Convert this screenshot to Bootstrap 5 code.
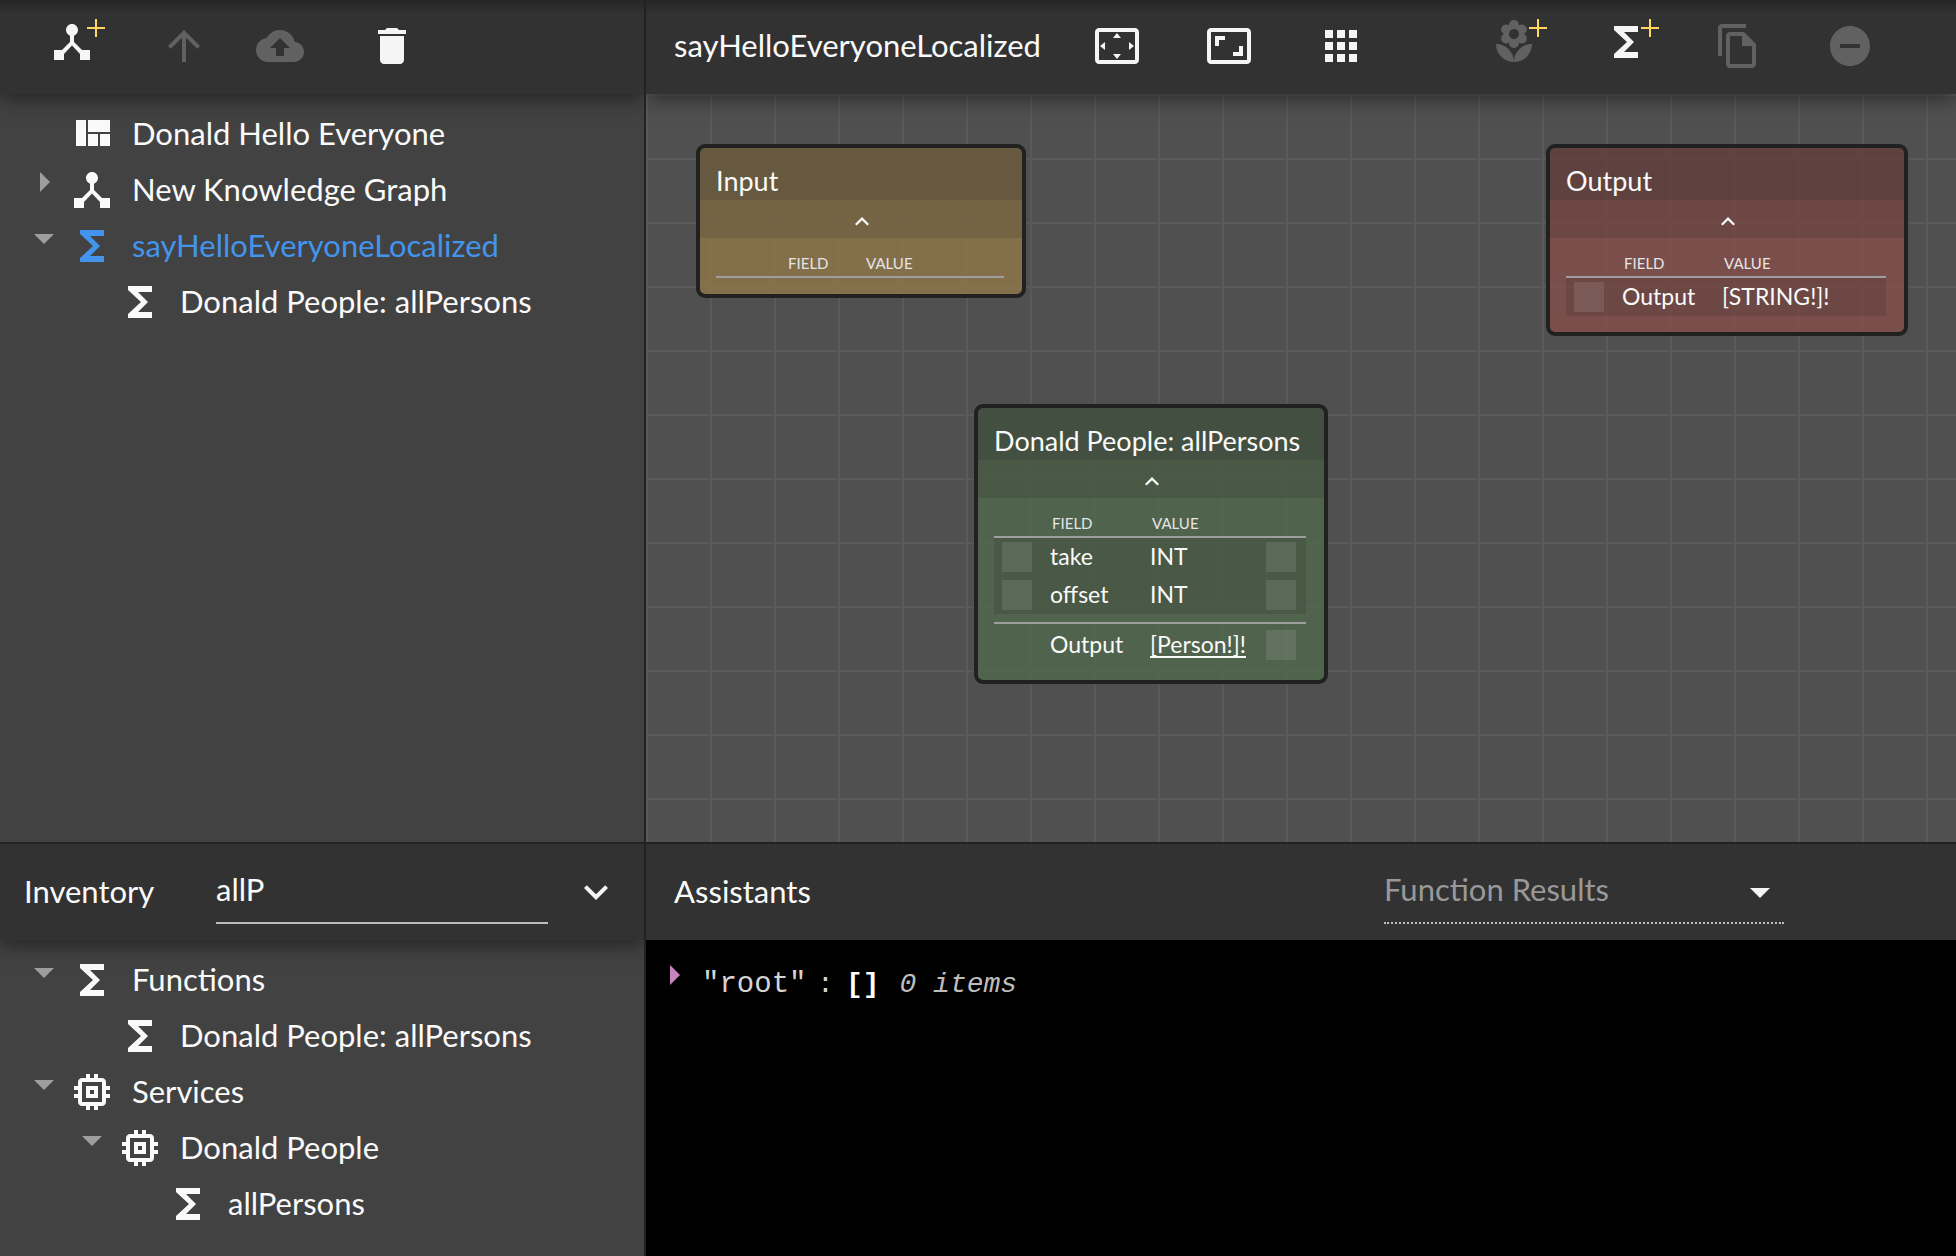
<!DOCTYPE html>
<html lang="en">
<head>
<meta charset="utf-8">
<meta name="viewport" content="width=device-width, initial-scale=1">
<title>Knowledge graph editor</title>
<link rel="stylesheet" href="https://cdn.jsdelivr.net/npm/bootstrap@5.3.0/dist/css/bootstrap.min.css">
<script src="https://cdn.jsdelivr.net/npm/bootstrap@5.3.0/dist/js/bootstrap.bundle.min.js"></script>
<style>
  :root {
    --bar: #323232;
    --panel: #424242;
    --line: #222;
    --ink: #fafafa;
    --off: #616161;
  }
  body {
    background: var(--panel);
    color: var(--ink);
    font-family: Lato, "Open Sans", sans-serif;
    font-size: 31px;
    line-height: 40px;
  }
  svg { display: block; fill: currentColor; flex: none; }
  .ico { width: 48px; height: 48px; }

  .workspace {
    display: grid;
    grid-template-columns: 33.03% minmax(0, 1fr);
    grid-template-rows: 67.2% minmax(0, 1fr);
  }
  .pane-left { border-right: 2px solid var(--line); }
  .pane-top { border-bottom: 2px solid var(--line); }

  .bar { background: var(--bar); flex: none; position: relative; z-index: 2; }
  .bar-main { height: 94px; padding-bottom: 2px; box-shadow: 0 4px 20px rgba(0, 0, 0, .5); background: linear-gradient(#252525, var(--bar) 14px); }
  .bar-sub { height: 96px; }
  .bar-cast { box-shadow: 0 4px 20px rgba(0, 0, 0, .5); }
  .bar-title { font-size: 31px; font-weight: 400; line-height: 40px; margin: 0; padding-bottom: 2px; }

  .tool { background: none; border: 0; padding: 0; color: #f5f5f5; position: relative; }
  .tool:disabled { color: var(--off); }
  .tool-add { margin-bottom: 8px; }
  .tool-add .plus { position: absolute; right: -10px; top: 0; width: 20px; height: 20px; color: #ffd75e; }
  .gap-tools { gap: 64px; }
  .tools-left { padding-left: 48px; }
  .tools-right { padding-right: 82px; }
  .pad-title { padding-left: 28px; }
  .tools-mid { margin-left: 52px; }

  .tree { list-style: none; margin: 0; padding: 12px 0 0; }
  .tree .tree { padding: 0 0 0 48px; }
  .tree-row { height: 56px; padding-left: 34px; }
  .twist { background: none; border: 0; padding: 0; margin: 10px 14px 0 0; width: 20px; height: 20px; color: #9e9e9e; align-self: flex-start; }
  .tree-link { color: inherit; text-decoration: none; gap: 16px; }
  .tree-link span { padding-bottom: 3px; }
  .tree-link.current { color: #4294ec; }

  .field-find, .field-pick { background: transparent; border: 0; border-radius: 0; padding: 0 0 4px; height: 64px; outline: 0; }
  .field-find { color: var(--ink); border-bottom: 2px solid #bdbdbd; width: 332px; }
  .field-pick { color: #999; border-bottom: 2px dotted #bdbdbd; width: 400px; appearance: none; display: block; }
  .pick-mark { position: absolute; right: 14px; top: 28px; width: 20px; height: 10px; color: #f5f5f5; pointer-events: none; }
  .inv-name { padding-left: 24px; padding-bottom: 2px; width: 216px; }
  .inv-more { margin-left: 24px; }
  .pick-box { margin-right: 172px; }

  .board {
    background-color: #505050;
    background-image:
      linear-gradient(90deg, #595959 2px, transparent 2px),
      linear-gradient(#595959 2px, transparent 2px);
    background-size: 64px 64px;
    overflow: hidden;
  }
  .node { position: absolute; border: 4px solid #212121; border-radius: 9px; font-size: 23px; line-height: 28px; background-clip: padding-box; }
  .node-in { left: 50px; top: 50px; width: 330px; background-color: rgba(144, 120, 74, .8); }
  .node-out { left: 900px; top: 50px; width: 362px; background-color: rgba(132, 78, 72, .8); }
  .node-fn { left: 328px; top: 310px; width: 354px; background-color: rgba(80, 104, 76, .8); }
  .node-head { height: 52px; margin: 0; padding: 14px 0 0 16px; font-size: 27px; line-height: 38px; font-weight: 400; background: rgba(40, 40, 40, .32); white-space: nowrap; }
  .node-fold { display: flex; width: 100%; height: 38px; border: 0; padding: 4px 0 0 2px; background: rgba(40, 40, 40, .16); color: var(--ink); align-items: center; justify-content: center; }
  .node-fold svg { width: 24px; height: 24px; }
  .node-body { padding: 0 18px 16px 16px; }
  .node-body table { width: 100%; table-layout: fixed; border-collapse: separate; border-spacing: 0; }
  .node-body th { font-size: 15px; line-height: 20px; font-weight: 400; padding: 14px 0 2px 10px; color: #e6e6e6; }
  .node-body thead > tr > * { height: 40px; border-bottom: 2px solid #9e9e9e; }
  .node-body tbody td { height: 38px; padding: 0 0 2px 8px; white-space: nowrap; }
  .node-body tbody .plugcell { padding: 0 0 0 8px; }
  .rows-in { background: rgba(40, 40, 40, .16); }
  .node-sum { border-top: 2px solid #9e9e9e; margin-top: 8px; padding-top: 2px; }
  .c-plug { width: 48px; }
  .c-wide { width: 62px; }
  .c-name { width: 100px; }
  .c-name-s { width: 78px; }
  .plug { display: block; width: 30px; height: 30px; border: 0; padding: 0; background: rgba(255, 255, 255, .1); }
  .type-link { color: inherit; text-underline-offset: 3px; text-decoration-thickness: 2px; }

  .console { background: #000; color: #d4d4d4; font-family: "Liberation Mono", monospace; font-size: 28px; line-height: 40px; padding: 25px 0 0 18px; }
  .console .twist { color: #c586c0; margin: 0 18px 0 0; }
  .console .key { font-size: 29px; width: 115px; }
  .console strong { color: #fff; margin: 0 20px 0 12px; }
  .console em { color: #bdbdbd; }
</style>
</head>
<body>
<svg class="d-none" aria-hidden="true">
  <symbol id="i-hub" viewBox="0 0 24 24"><path d="M17 16l-4-4V8.820C14.160 8.400 15 7.300 15 6c0-1.660-1.340-3-3-3S9 4.340 9 6c0 1.300.84 2.400 2 2.820V12l-4 4H3v5h5v-3.050l4-4.200 4 4.200V21h5v-5h-4z"/></symbol>
  <symbol id="i-plus" viewBox="0 0 20 20"><path d="M9 1h2v8h8v2h-8v8H9v-8H1V9h8z"/></symbol>
  <symbol id="i-up" viewBox="0 0 24 24"><path d="M4 12l1.410 1.410L11 7.830V20h2V7.830l5.580 5.590L20 12l-8-8-8 8z"/></symbol>
  <symbol id="i-cloud" viewBox="0 0 24 24"><path d="M19.350 10.040C18.670 6.590 15.640 4 12 4 9.110 4 6.600 5.640 5.350 8.040 2.340 8.360 0 10.910 0 14c0 3.310 2.690 6 6 6h13c2.760 0 5-2.240 5-5 0-2.640-2.050-4.780-4.650-4.960zM14 13v4h-4v-4H7l5-5 5 5h-3z"/></symbol>
  <symbol id="i-trash" viewBox="0 0 24 24"><path d="M6 19c0 1.100.9 2 2 2h8c1.100 0 2-.9 2-2V7H6v12zM19 4h-3.500l-1-1h-5l-1 1H5v2h14V4z"/></symbol>
  <symbol id="i-scan" viewBox="0 0 24 24"><path d="M12 5.500L10 8h4l-2-2.500zm6 4.500v4l2.500-2L18 10zM6 10l-2.500 2L6 14v-4zm8 6h-4l2 2.500 2-2.500zm7-13H3c-1.100 0-2 .9-2 2v14c0 1.100.9 2 2 2h18c1.100 0 2-.9 2-2V5c0-1.100-.9-2-2-2zm0 16H3V5h18v14z"/></symbol>
  <symbol id="i-ratio" viewBox="0 0 24 24"><path d="M19 12h-2v3h-3v2h5v-5zM7 9h3V7H5v5h2V9zm14-6H3c-1.100 0-2 .9-2 2v14c0 1.100.9 2 2 2h18c1.100 0 2-.9 2-2V5c0-1.100-.9-2-2-2zm0 16H3V5h18v14z"/></symbol>
  <symbol id="i-apps" viewBox="0 0 24 24"><path d="M4 8h4V4H4v4zm6 12h4v-4h-4v4zm-6 0h4v-4H4v4zm0-6h4v-4H4v4zm6 0h4v-4h-4v4zm6-10v4h4V4h-4zm-6 4h4V4h-4v4zm6 6h4v-4h-4v4zm0 6h4v-4h-4v4z"/></symbol>
  <symbol id="i-flower" viewBox="0 0 24 24"><path d="M12 22c4.970 0 9-4.030 9-9-4.970 0-9 4.030-9 9zM5.600 10.250c0 1.380 1.120 2.500 2.500 2.500.53 0 1.010-.16 1.420-.44l-.02.19c0 1.380 1.120 2.500 2.500 2.500s2.500-1.120 2.500-2.500l-.02-.19c.4.28.89.44 1.420.44 1.380 0 2.500-1.120 2.500-2.500 0-1-.59-1.850-1.430-2.250.84-.4 1.430-1.250 1.430-2.250 0-1.380-1.120-2.500-2.500-2.500-.53 0-1.010.16-1.420.44l.02-.19C14.500 2.120 13.380 1 12 1S9.500 2.120 9.500 3.500l.02.19c-.4-.28-.89-.44-1.420-.44-1.380 0-2.500 1.120-2.500 2.500 0 1 .59 1.850 1.430 2.250-.84.4-1.430 1.250-1.430 2.250zM12 5.500c1.380 0 2.500 1.120 2.500 2.500s-1.120 2.500-2.500 2.500S9.500 9.380 9.500 8s1.120-2.500 2.500-2.500zM3 13c0 4.970 4.030 9 9 9 0-4.970-4.030-9-9-9z"/></symbol>
  <symbol id="i-sum" viewBox="0 0 24 24"><path d="M18 4H6v2l6.500 6L6 18v2h12v-3h-7l5-5-5-5h7z"/></symbol>
  <symbol id="i-copy" viewBox="0 0 24 24"><path d="M16 1H4c-1.100 0-2 .9-2 2v14h2V3h12V1zm-1 4H8c-1.100 0-1.990.9-1.990 2L6 21c0 1.100.89 2 1.990 2H19c1.100 0 2-.9 2-2V11l-6-6zM8 21V7h6v5h5v9H8z"/></symbol>
  <symbol id="i-minus" viewBox="0 0 24 24"><path d="M12 2C6.480 2 2 6.480 2 12s4.480 10 10 10 10-4.480 10-10S17.520 2 12 2zm5 11H7v-2h10v2z"/></symbol>
  <symbol id="i-quilt" viewBox="0 0 24 24"><path d="M10 18h5v-6h-5v6zm-6 0h5V5H4v13zm12 0h5v-6h-5v6zM10 5v6h11V5H10z"/></symbol>
  <symbol id="i-chip" viewBox="0 0 24 24"><path d="M15 9H9v6h6V9zm-2 4h-2v-2h2v2zm8-2V9h-2V7c0-1.100-.9-2-2-2h-2V3h-2v2h-2V3H9v2H7c-1.100 0-2 .9-2 2v2H3v2h2v2H3v2h2v2c0 1.100.9 2 2 2h2v2h2v-2h2v2h2v-2h2c1.100 0 2-.9 2-2v-2h2v-2h-2v-2h2zm-4 6H7V7h10v10z"/></symbol>
  <symbol id="i-down" viewBox="0 0 24 24"><path d="M16.590 8.590L12 13.170 7.410 8.590 6 10l6 6 6-6z"/></symbol>
  <symbol id="i-fold" viewBox="0 0 24 24"><path d="M12 8l-7 7 1.600 1.600L12 11.200l5.400 5.400L19 15z"/></symbol>
  <symbol id="i-open" viewBox="0 0 20 20"><path d="M0 6h20L10 16z"/></symbol>
  <symbol id="i-shut" viewBox="0 0 20 20"><path d="M6 0v20l10-10z"/></symbol>
</svg>

<main class="workspace vh-100 overflow-hidden">
  <section class="pane-left pane-top d-flex flex-column overflow-hidden" aria-label="Solution">
    <header class="bar bar-main d-flex align-items-center tools-left">
      <button class="tool tool-add" aria-label="Add graph"><svg class="ico"><use href="#i-hub"/></svg><svg class="plus"><use href="#i-plus"/></svg></button>
      <button class="tool ms-5 ps-3" aria-label="Move up" disabled><svg class="ico"><use href="#i-up"/></svg></button>
      <button class="tool ms-5" aria-label="Upload" disabled><svg class="ico"><use href="#i-cloud"/></svg></button>
      <button class="tool ms-5 ps-3" aria-label="Delete"><svg class="ico"><use href="#i-trash"/></svg></button>
    </header>
    <ul class="tree">
      <li><div class="tree-row d-flex align-items-center"><span class="twist"></span><a class="tree-link d-flex align-items-center" href="#"><svg class="ico"><use href="#i-quilt"/></svg><span>Donald Hello Everyone</span></a></div></li>
      <li><div class="tree-row d-flex align-items-center"><button class="twist" aria-label="Expand"><svg width="20" height="20"><use href="#i-shut"/></svg></button><a class="tree-link d-flex align-items-center" href="#"><svg class="ico"><use href="#i-hub"/></svg><span>New Knowledge Graph</span></a></div></li>
      <li><div class="tree-row d-flex align-items-center"><button class="twist" aria-label="Collapse"><svg width="20" height="20"><use href="#i-open"/></svg></button><a class="tree-link current d-flex align-items-center" href="#"><svg class="ico"><use href="#i-sum"/></svg><span>sayHelloEveryoneLocalized</span></a></div>
        <ul class="tree">
          <li><div class="tree-row d-flex align-items-center"><span class="twist"></span><a class="tree-link d-flex align-items-center" href="#"><svg class="ico"><use href="#i-sum"/></svg><span>Donald People: allPersons</span></a></div></li>
        </ul>
      </li>
    </ul>
  </section>

  <section class="pane-top d-flex flex-column overflow-hidden" aria-label="Function editor">
    <header class="bar bar-main d-flex align-items-center pad-title tools-right">
      <h1 class="bar-title">sayHelloEveryoneLocalized</h1>
      <div class="tools-mid d-flex gap-tools">
        <button class="tool" aria-label="Centre"><svg class="ico"><use href="#i-scan"/></svg></button>
        <button class="tool" aria-label="Fit to view"><svg class="ico"><use href="#i-ratio"/></svg></button>
        <button class="tool" aria-label="Arrange"><svg class="ico"><use href="#i-apps"/></svg></button>
      </div>
      <div class="ms-auto d-flex align-items-center gap-tools">
        <button class="tool tool-add" aria-label="Add entity" disabled><svg class="ico"><use href="#i-flower"/></svg><svg class="plus"><use href="#i-plus"/></svg></button>
        <button class="tool tool-add" aria-label="Add function"><svg class="ico"><use href="#i-sum"/></svg><svg class="plus"><use href="#i-plus"/></svg></button>
        <button class="tool" aria-label="Copy" disabled><svg class="ico"><use href="#i-copy"/></svg></button>
        <button class="tool" aria-label="Remove" disabled><svg class="ico"><use href="#i-minus"/></svg></button>
      </div>
    </header>
    <div class="board position-relative flex-grow-1">
      <article class="node node-in">
        <h2 class="node-head">Input</h2>
        <button class="node-fold" aria-label="Fold"><svg><use href="#i-fold"/></svg></button>
        <div class="node-body">
          <table>
            <colgroup><col class="c-wide"><col class="c-name-s"><col></colgroup>
            <thead><tr><td></td><th scope="col">FIELD</th><th scope="col">VALUE</th></tr></thead>
          </table>
        </div>
      </article>

      <article class="node node-out">
        <h2 class="node-head">Output</h2>
        <button class="node-fold" aria-label="Fold"><svg><use href="#i-fold"/></svg></button>
        <div class="node-body">
          <table>
            <colgroup><col class="c-plug"><col class="c-name"><col></colgroup>
            <thead><tr><td></td><th scope="col">FIELD</th><th scope="col">VALUE</th></tr></thead>
            <tbody class="rows-in"><tr><td class="plugcell"><button class="plug" aria-label="Output in"></button></td><td>Output</td><td>[STRING!]!</td></tr></tbody>
          </table>
        </div>
      </article>

      <article class="node node-fn">
        <h2 class="node-head">Donald People: allPersons</h2>
        <button class="node-fold" aria-label="Fold"><svg><use href="#i-fold"/></svg></button>
        <div class="node-body">
          <table>
            <colgroup><col class="c-plug"><col class="c-name"><col><col class="c-plug"></colgroup>
            <thead><tr><td></td><th scope="col">FIELD</th><th scope="col">VALUE</th><td></td></tr></thead>
            <tbody class="rows-in">
              <tr><td class="plugcell"><button class="plug" aria-label="take in"></button></td><td>take</td><td>INT</td><td class="plugcell"><button class="plug" aria-label="take out"></button></td></tr>
              <tr><td class="plugcell"><button class="plug" aria-label="offset in"></button></td><td>offset</td><td>INT</td><td class="plugcell"><button class="plug" aria-label="offset out"></button></td></tr>
            </tbody>
          </table>
          <div class="node-sum">
            <table>
              <colgroup><col class="c-plug"><col class="c-name"><col><col class="c-plug"></colgroup>
              <tbody><tr><td></td><td>Output</td><td><a class="type-link" href="#">[Person!]!</a></td><td class="plugcell"><button class="plug" aria-label="Output out"></button></td></tr></tbody>
            </table>
          </div>
        </div>
      </article>
    </div>
  </section>

  <section class="pane-left d-flex flex-column overflow-hidden" aria-label="Inventory">
    <header class="bar bar-sub bar-cast d-flex align-items-center">
      <label class="inv-name" for="find">Inventory</label>
      <input class="field-find" id="find" type="text" value="allP">
      <button class="tool inv-more" aria-label="More"><svg class="ico"><use href="#i-down"/></svg></button>
    </header>
    <ul class="tree">
      <li><div class="tree-row d-flex align-items-center"><button class="twist" aria-label="Collapse"><svg width="20" height="20"><use href="#i-open"/></svg></button><a class="tree-link d-flex align-items-center" href="#"><svg class="ico"><use href="#i-sum"/></svg><span>Functions</span></a></div>
        <ul class="tree">
          <li><div class="tree-row d-flex align-items-center"><span class="twist"></span><a class="tree-link d-flex align-items-center" href="#"><svg class="ico"><use href="#i-sum"/></svg><span>Donald People: allPersons</span></a></div></li>
        </ul>
      </li>
      <li><div class="tree-row d-flex align-items-center"><button class="twist" aria-label="Collapse"><svg width="20" height="20"><use href="#i-open"/></svg></button><a class="tree-link d-flex align-items-center" href="#"><svg class="ico"><use href="#i-chip"/></svg><span>Services</span></a></div>
        <ul class="tree">
          <li><div class="tree-row d-flex align-items-center"><button class="twist" aria-label="Collapse"><svg width="20" height="20"><use href="#i-open"/></svg></button><a class="tree-link d-flex align-items-center" href="#"><svg class="ico"><use href="#i-chip"/></svg><span>Donald People</span></a></div>
            <ul class="tree">
              <li><div class="tree-row d-flex align-items-center"><span class="twist"></span><a class="tree-link d-flex align-items-center" href="#"><svg class="ico"><use href="#i-sum"/></svg><span>allPersons</span></a></div></li>
            </ul>
          </li>
        </ul>
      </li>
    </ul>
  </section>

  <section class="d-flex flex-column overflow-hidden" aria-label="Assistants">
    <header class="bar bar-sub d-flex align-items-center pad-title">
      <label class="bar-title" for="pick">Assistants</label>
      <div class="pick-box position-relative ms-auto">
        <select class="field-pick" id="pick"><option>Function Results</option></select>
        <svg class="pick-mark" viewBox="0 0 20 10" aria-hidden="true"><path d="M0 0h20L10 10z"/></svg>
      </div>
    </header>
    <div class="console flex-grow-1">
      <div class="d-flex align-items-center">
        <button class="twist" aria-label="Expand root"><svg width="20" height="20"><use href="#i-shut"/></svg></button>
        <span class="key">"root"</span><span>:</span><strong>[]</strong><em>0 items</em>
      </div>
    </div>
  </section>
</main>
</body>
</html>
